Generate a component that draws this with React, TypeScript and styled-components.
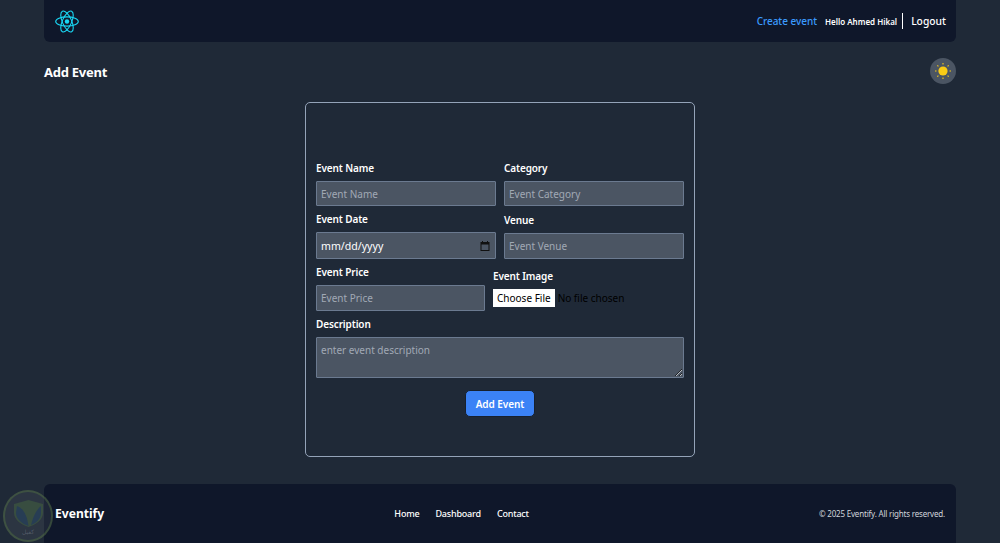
import React from "react";
import styled, { createGlobalStyle } from "styled-components";

const Global = createGlobalStyle`
  html, body { margin: 0; padding: 0; background: #1f2937; }
  * { box-sizing: border-box; }
  body { font-family: "Noto Sans", "Open Sans", "Liberation Sans", sans-serif; color: #fff; }
`;
const Page = styled.div`
  position: relative; height: 543px; overflow: hidden; background: #1f2937;
  display: flex; flex-direction: column; padding: 0 44px;
`;
const Nav = styled.nav`
  height: 42px; flex: none; background: #0f172a; border-radius: 0 0 6px 6px;
  display: flex; align-items: center; justify-content: space-between; padding: 0 10px 0 11px;
`;
const NavLinks = styled.div`display: flex; align-items: center;`;
const CreateLink = styled.a`font-size: 10px; font-weight: 500; letter-spacing: -.03px; color: #3b9bff; margin-right: 8px;`;
const Hello = styled.span`font-size: 8px; font-weight: 600; padding-right: 5px; border-right: 1.5px solid #fff; height: 16px; display: flex; align-items: center;`;
const Logout = styled.a`font-size: 10.3px; margin-left: 8px; font-weight: 500;`;
const TitleRow = styled.div`
  height: 26px; margin-top: 16px; flex: none; display: flex; align-items: center; justify-content: space-between;
`;
const Title = styled.h1`font-size: 13px; letter-spacing: -.25px; font-weight: 700; margin: 2px 0 0;`;
const ThemeButton = styled.button`
  width: 26px; height: 26px; border: 0; border-radius: 50%; background: #4b5563; padding: 0;
  display: flex; align-items: center; justify-content: center;
`;
const Card = styled.form`
  width: 390px; height: 355px; margin: 18px auto 0; flex: none; border: 1px solid #94a3b8; border-radius: 5px;
  padding: 59px 10px 0; display: flex; flex-direction: column; align-items: stretch;
`;
const Row = styled.div`display: flex; gap: 8px; align-items: flex-end; margin-bottom: 7px;`;
const Field = styled.label<{ $w?: number }>`
  display: flex; flex-direction: column; flex: ${p => (p.$w ? `0 0 ${p.$w}px` : "1 1 0")}; min-width: 0;
`;
const WideField = styled.label`display: flex; flex-direction: column; flex: none;`;
const LabelText = styled.span`font-size: 10px; letter-spacing: -.12px; font-weight: 600; line-height: 13px; margin-bottom: 6px;`;
const fieldCss = `
  width: 100%; background: #4b5563; border: 1px solid #6b7a90; color: #fff;
  font-family: inherit; font-size: 10px; padding: 0 4px; outline: none; border-radius: 1px; display: block;
  &::placeholder { color: #a1a9b5; opacity: 1; }
`;
const Input = styled.input<{ $h?: number }>`${fieldCss} height: ${p => p.$h ?? 26}px;`;
const DateBox = styled.div`
  ${fieldCss} height: 27px; display: flex; align-items: center; justify-content: space-between; font-size: 10.6px; padding-right: 5px;
`;
const FileRow = styled.div`display: flex; align-items: center; height: 18px; margin-bottom: 4px; font-size: 10px; color: #000;`;
const FileButton = styled.span`
  background: #fff; color: #000; height: 18px; padding: 0 4px; display: flex; align-items: center; margin-right: 3px; font-size: 10px;
`;
const TextArea = styled.textarea`${fieldCss} height: 41px; padding: 5px 4px; resize: vertical;`;
const Submit = styled.button`
  align-self: center; width: 70px; height: 27px; margin-top: 12px; padding: 0; background: #3b82f6; color: #fff; border: 1px solid #17202e;
  border-radius: 5px; font-family: inherit; font-size: 10px; letter-spacing: -.05px; font-weight: 600;
`;
const Footer = styled.footer`
  margin-top: auto; height: 59px; flex: none; background: #0f172a; border-radius: 6px 6px 0 0;
  display: flex; justify-content: space-between; align-items: center; padding: 0 11px;
`;
const Brand = styled.div`font-size: 12.1px; font-weight: 700;`;
const FootLinks = styled.div`display: flex; gap: 16px;`;
const FootLink = styled.a`font-size: 9px; letter-spacing: -.2px; font-weight: 500;`;
const Copy = styled.div`font-size: 8px; letter-spacing: -.19px; color: #d1d5db; text-align: right;`;
const Watermark = styled.div`
  position: absolute; left: 3px; top: 490px; width: 50px; height: 52px; border-radius: 50%;
  background: rgba(130,138,145,.13); border: 2px solid rgba(90,125,65,.4);
  display: flex; flex-direction: column; align-items: center; justify-content: flex-start; padding-top: 8px;
`;
const WatermarkText = styled.span`
  font-family: "DejaVu Sans", sans-serif; font-size: 6px; line-height: 6px; margin-top: 2px; color: rgba(130,140,150,.45);
`;
const ShieldArt = styled.svg`opacity: .75;`;

const ReactLogo = () => (
  <svg width="24" height="23" viewBox="-12 -11.5 24 23" fill="none" stroke="#19d8f5" strokeWidth="1.1">
    <circle r="2.2" fill="#19d8f5" stroke="none" />
    <ellipse rx="11.3" ry="4.6" />
    <ellipse rx="11.3" ry="4.6" transform="rotate(66)" />
    <ellipse rx="11.3" ry="4.6" transform="rotate(114)" />
  </svg>
);
const Sun = () => (
  <svg width="18" height="18" viewBox="-9 -9 18 18" stroke="#facc15" strokeWidth="1.1">
    <circle r="4.6" fill="#facc15" stroke="none" />
    {[0, 45, 90, 135, 180, 225, 270, 315].map(a => (
      <line key={a} x1="0" y1="-6.5" x2="0" y2="-8" transform={`rotate(${a})`} />
    ))}
  </svg>
);
const Calendar = () => (
  <svg width="10" height="10" viewBox="0 0 10 10" fill="none">
    <path d="M2.5 0v2M7.5 0v2" stroke="#111" />
    <rect x="1" y="1.5" width="8" height="8" stroke="#111" />
    <rect x="1" y="1" width="8" height="2.5" fill="#111" />
  </svg>
);
const Shield = () => (
  <ShieldArt width="31" height="27" viewBox="0 0 31 27">
    <path d="M15.5 0 L30 4 V13 C30 20 22 25 15.5 27 C9 25 1 20 1 13 V4 Z" fill="#3c5540" />
    <path d="M4 6 C10 8 14 15 15.5 26 C9 24 3 19 3 13 Z" fill="#26405a" />
    <path d="M18 25 C20 17 23 10 28 6 V13 C28 19 23 23 18 25 Z" fill="#26405a" />
  </ShieldArt>
);

export default function App() {
  return (
    <Page>
      <Global />
      <Nav>
        <ReactLogo />
        <NavLinks>
          <CreateLink>Create event</CreateLink>
          <Hello>Hello Ahmed Hikal</Hello>
          <Logout>Logout</Logout>
        </NavLinks>
      </Nav>
      <TitleRow>
        <Title>Add Event</Title>
        <ThemeButton type="button"><Sun /></ThemeButton>
      </TitleRow>
      <Card>
        <Row>
          <Field><LabelText>Event Name</LabelText><Input $h={25} placeholder="Event Name" /></Field>
          <Field><LabelText>Category</LabelText><Input $h={25} placeholder="Event Category" /></Field>
        </Row>
        <Row>
          <Field><LabelText>Event Date</LabelText><DateBox>mm/dd/yyyy<Calendar /></DateBox></Field>
          <Field><LabelText>Venue</LabelText><Input placeholder="Event Venue" /></Field>
        </Row>
        <Row>
          <Field $w={169}><LabelText>Event Price</LabelText><Input placeholder="Event Price" /></Field>
          <Field>
            <LabelText>Event Image</LabelText>
            <FileRow><FileButton>Choose File</FileButton>No file chosen</FileRow>
          </Field>
        </Row>
        <WideField><LabelText>Description</LabelText><TextArea placeholder="enter event description" /></WideField>
        <Submit type="button">Add Event</Submit>
      </Card>
      <Footer>
        <Brand>Eventify</Brand>
        <FootLinks>
          <FootLink>Home</FootLink>
          <FootLink>Dashboard</FootLink>
          <FootLink>Contact</FootLink>
        </FootLinks>
        <Copy>© 2025 Eventify. All rights reserved.</Copy>
      </Footer>
      <Watermark><Shield /><WatermarkText>كفيل</WatermarkText></Watermark>
    </Page>
  );
}
